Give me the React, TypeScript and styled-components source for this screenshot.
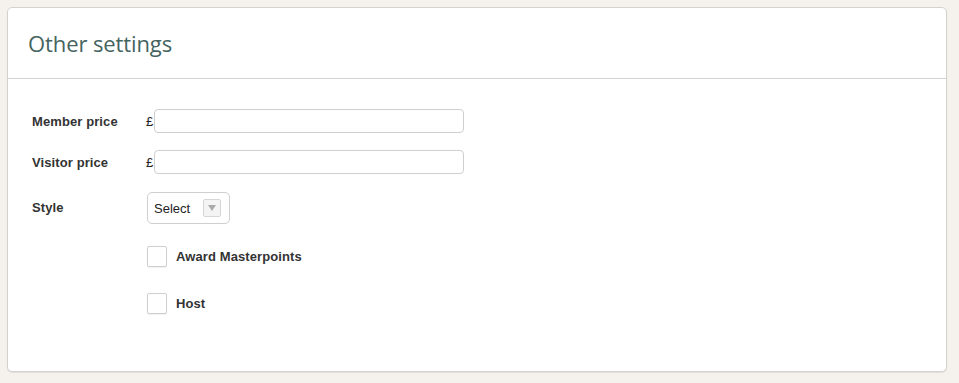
import React from "react";
import styled, { createGlobalStyle } from "styled-components";

const GlobalStyle = createGlobalStyle`
	body {
		margin: 0;
		background: #f5f2ee;
		font-family: "Liberation Sans", Arial, sans-serif;
	}
`;

const Page = styled.div`
	padding: 7px 12px 11px 7px;
`;

const Card = styled.div`
	background: #fff;
	border: 1px solid #d4d2cf;
	border-radius: 5px;
	box-shadow: 0 1px 1px rgba(0, 0, 0, 0.08);
	height: 365px;
	box-sizing: border-box;
`;

const Header = styled.div`
	height: 70px;
	border-bottom: 1px solid #d4d2cf;
	display: flex;
	align-items: center;
	padding-left: 20px;
`;

const Title = styled.h2`
	margin: 0;
	font-family: "Open Sans", sans-serif;
	font-weight: 400;
	font-size: 22px;
	color: #45645f;
	letter-spacing: -0.1px;
`;

const Body = styled.div`
	padding: 30px 24px 0 24px;
	display: grid;
	grid-template-columns: 114px 1fr;
	row-gap: 17px;
	align-items: center;
`;

const Label = styled.label`
	font-size: 13px;
	font-weight: 700;
	color: #333;
	letter-spacing: 0.1px;
`;

const PriceField = styled.div`
	display: flex;
	align-items: center;
	font-size: 13px;
	color: #222;
`;

const TextInput = styled.input`
	width: 310px;
	height: 24px;
	box-sizing: border-box;
	border: 1px solid #cfcfcf;
	border-radius: 4px;
	margin-left: 1px;
`;

const SelectBox = styled.div`
	width: 83px;
	height: 32px;
	box-sizing: border-box;
	border: 1px solid #cfcfcf;
	border-radius: 5px;
	margin-left: 1px;
	margin-top: 1px;
	display: flex;
	align-items: center;
	justify-content: space-between;
	padding: 0 8px 0 6px;
	font-size: 13px;
	color: #222;
`;

const Arrow = styled.span`
	width: 18px;
	height: 18px;
	box-sizing: border-box;
	border: 1px solid #d6d6d6;
	border-radius: 2px;
	background: #f4f4f4;
	display: flex;
	align-items: center;
	justify-content: center;
	&::after {
		content: "";
		border-left: 4px solid transparent;
		border-right: 4px solid transparent;
		border-top: 6px solid #aaa;
	}
`;

const CheckRow = styled.div<{ $top: number }>`
	grid-column: 2;
	display: flex;
	align-items: center;
	gap: 9px;
	margin-left: 1px;
	margin-top: ${(p) => p.$top}px;
`;

const Box = styled.span`
	width: 20px;
	height: 21px;
	box-sizing: border-box;
	border: 1px solid #cfcfcf;
	border-radius: 2px;
	box-shadow: 0 1px 1px rgba(0, 0, 0, 0.06);
	background: #fff;
`;

const App: React.FC = () => {
	return (
		<Page>
			<GlobalStyle />
			<Card>
				<Header>
					<Title>Other settings</Title>
				</Header>
				<Body>
					<Label>Member price</Label>
					<PriceField>
						£<TextInput />
					</PriceField>
					<Label>Visitor price</Label>
					<PriceField>
						£<TextInput />
					</PriceField>
					<Label>Style</Label>
					<SelectBox>
						Select
						<Arrow />
					</SelectBox>
					<CheckRow $top={5}>
						<Box />
						<Label>Award Masterpoints</Label>
					</CheckRow>
					<CheckRow $top={9}>
						<Box />
						<Label>Host</Label>
					</CheckRow>
				</Body>
			</Card>
		</Page>
	);
};

export default App;
